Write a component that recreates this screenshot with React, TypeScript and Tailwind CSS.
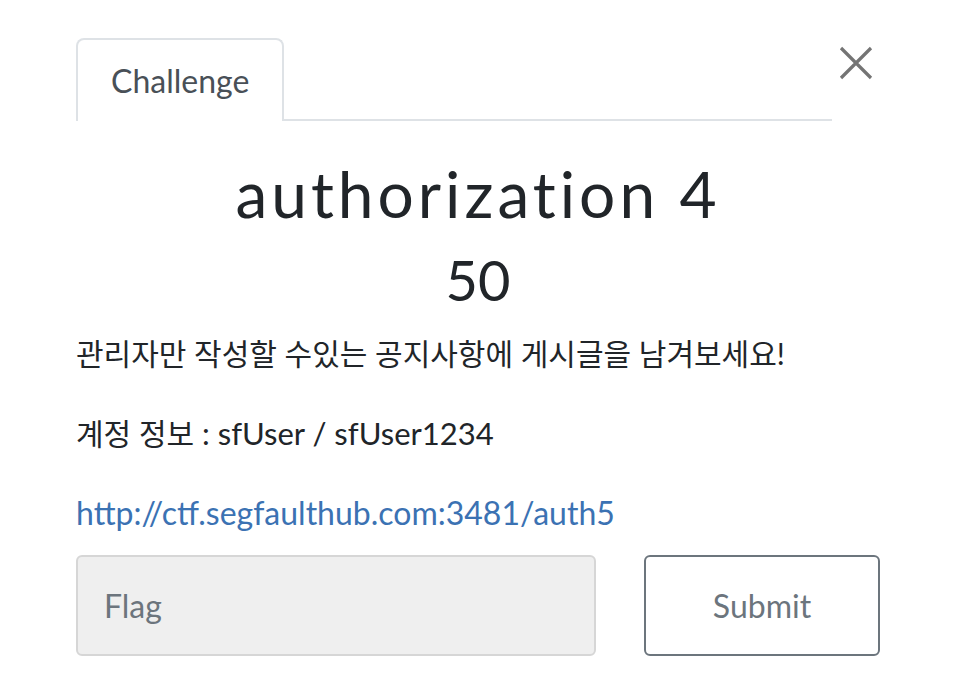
export default function App() {
  return (
    <div
      className="w-[968px] h-[692px] bg-white overflow-hidden"
      style={{ fontFamily: 'Lato, "Noto Sans CJK KR", sans-serif' }}
    >
      <div className="w-[804px] ml-[76px] pt-[38px] relative">
        <div className="w-[756px] flex border-b-2 border-[#dee2e6]">
          <div className="h-[83px] px-[33px] -mb-[2px] flex items-center border-2 border-b-0 border-[#dee2e6] rounded-t-[8px] bg-white text-[32px] text-[#495057]">
            Challenge
          </div>
        </div>
        <button className="absolute left-[762px] top-[45px] text-[#747474]">
          <svg width="36" height="36" viewBox="0 0 36 36" fill="none" stroke="currentColor" strokeWidth="3.2">
            <path d="M3 3L33 33M33 3L3 33" />
          </svg>
        </button>

        <h2 className="text-center text-[64px] leading-none tracking-[4px] text-[#212529] mt-[41px]">
          authorization 4
        </h2>
        <h3 className="text-center text-[56px] leading-none text-[#212529] mt-[26px]">50</h3>

        <div className="text-[32px] text-[#212529] mt-[27px] leading-[36px]">
          <p className="text-[30px]">관리자만 작성할 수있는 공지사항에 게시글을 남겨보세요!</p>
          <p className="mt-[44px] text-[31px]">
            <span className="text-[30px]">계정 정보</span> : sfUser / sfUser1234
          </p>
          <p className="mt-[44px]">
            <a className="text-[#3b72b3]">http://ctf.segfaulthub.com:3481/auth5</a>
          </p>
        </div>

        <div className="flex gap-[48px] mt-[24px]">
          <div className="w-[520px] h-[101px] rounded-[6px] border-2 border-[#d6d6d6] bg-[#efefef] flex items-center px-[26px] text-[32px] text-[#6c757d]">
            Flag
          </div>
          <button className="w-[236px] h-[101px] rounded-[6px] border-2 border-[#6c757d] bg-white text-[32px] text-[#6c757d]">
            Submit
          </button>
        </div>
      </div>
    </div>
  );
}
